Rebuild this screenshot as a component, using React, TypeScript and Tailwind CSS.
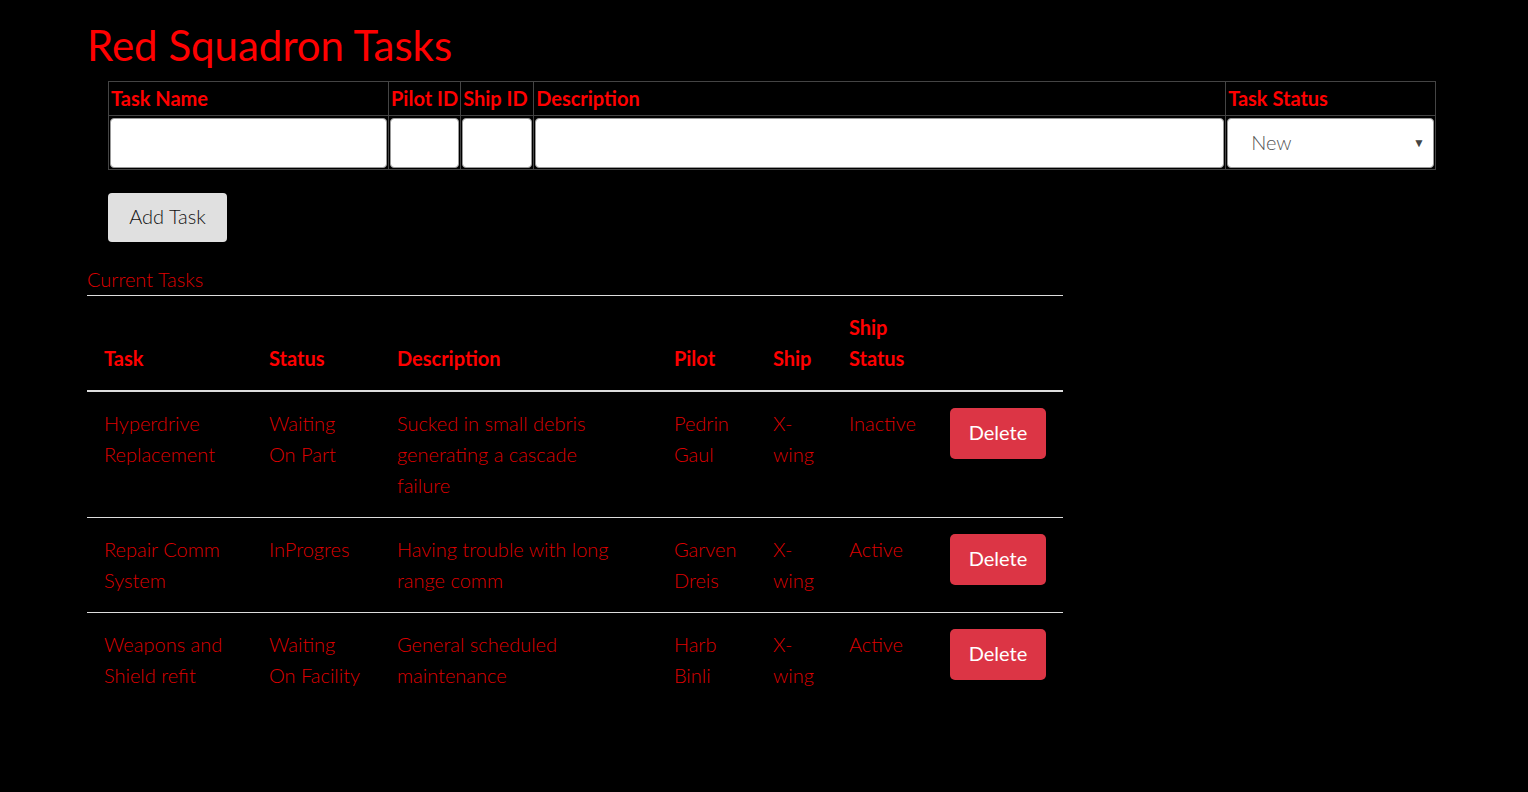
import React from "react";

const rows = [
  {
    task: ["Hyperdrive", "Replacement"],
    status: ["Waiting", "On Part"],
    desc: ["Sucked in small debris", "generating a cascade", "failure"],
    pilot: ["Pedrin", "Gaul"],
    ship: ["X-", "wing"],
    shipStatus: ["Inactive"],
  },
  {
    task: ["Repair Comm", "System"],
    status: ["InProgres"],
    desc: ["Having trouble with long", "range comm"],
    pilot: ["Garven", "Dreis"],
    ship: ["X-", "wing"],
    shipStatus: ["Active"],
  },
  {
    task: ["Weapons and", "Shield refit"],
    status: ["Waiting", "On Facility"],
    desc: ["General scheduled", "maintenance"],
    pilot: ["Harb", "Binli"],
    ship: ["X-", "wing"],
    shipStatus: ["Active"],
  },
];

function Lines({ lines }: { lines: string[] }) {
  return (
    <>
      {lines.map((l, i) => (
        <div key={i} className="whitespace-nowrap">
          {l}
        </div>
      ))}
    </>
  );
}

export default function App() {
  return (
    <div className="min-h-[792px] w-full bg-black font-['Lato','Open_Sans',sans-serif] text-[#ff0000]">
      <div className="pl-[87px] pt-[20px]">
        <h1 className="text-[42px] leading-[50px] font-normal text-[#ff0000]">Red Squadron Tasks</h1>

        <div className="ml-[21px] mt-[11px] w-[1328px]">
          <table className="w-full border-collapse border border-[#444]">
            <thead>
              <tr className="h-[34px]">
                <th className="w-[280px] border border-[#444] px-[2px] pb-[2px] text-left text-[20px] font-bold leading-[30px]">Task Name</th>
                <th className="w-[72px] border border-[#444] px-[2px] pb-[2px] text-left text-[20px] font-bold leading-[30px] whitespace-nowrap">Pilot ID</th>
                <th className="w-[73px] border border-[#444] px-[2px] pb-[2px] text-left text-[20px] font-bold leading-[30px] whitespace-nowrap">Ship ID</th>
                <th className="w-[692px] border border-[#444] px-[2px] pb-[2px] text-left text-[20px] font-bold leading-[30px]">Description</th>
                <th className="border border-[#444] px-[2px] pb-[2px] text-left text-[20px] font-bold leading-[30px]">Task Status</th>
              </tr>
            </thead>
            <tbody>
              <tr className="h-[54px]">
                <td className="border border-[#444] p-[1px]">
                  <input className="block h-[50px] w-full rounded-[4px] border border-[#999] bg-white" />
                </td>
                <td className="border border-[#444] p-[1px]">
                  <input className="block h-[50px] w-full rounded-[4px] border border-[#999] bg-white" />
                </td>
                <td className="border border-[#444] p-[1px]">
                  <input className="block h-[50px] w-full rounded-[4px] border border-[#999] bg-white" />
                </td>
                <td className="border border-[#444] p-[1px]">
                  <input className="block h-[50px] w-full rounded-[4px] border border-[#999] bg-white" />
                </td>
                <td className="border border-[#444] p-[1px]">
                  <div className="relative flex h-[50px] w-full items-center rounded-[4px] border border-[#999] bg-white pl-[23px] pb-[2px] text-[20px] font-light text-[#555]">
                    New
                    <span className="absolute right-[8px] top-[15px] text-[12px] text-[#444]">▼</span>
                  </div>
                </td>
              </tr>
            </tbody>
          </table>

          <button className="mt-[23px] h-[49px] w-[119px] rounded-[4px] bg-[#e0e0e0] pb-[3px] text-[20px] font-light text-[#111]">
            Add Task
          </button>
        </div>

        <div className="mt-[23px] w-[976px]">
          <div className="border-b border-[#ddd] pb-[2px] text-[20px] font-light leading-[28px] text-[#dd0000]">
            Current Tasks
          </div>
          <table className="w-full border-collapse">
            <thead>
              <tr className="border-b-2 border-[#ddd]">
                <th className="w-[165px] px-[17px] pt-[16px] pb-[16px] text-left align-bottom text-[20px] font-bold leading-[31px]">Task</th>
                <th className="w-[128px] px-[17px] pt-[16px] pb-[16px] text-left align-bottom text-[20px] font-bold leading-[31px]">Status</th>
                <th className="w-[277px] px-[17px] pt-[16px] pb-[16px] text-left align-bottom text-[20px] font-bold leading-[31px]">Description</th>
                <th className="w-[99px] px-[17px] pt-[16px] pb-[16px] text-left align-bottom text-[20px] font-bold leading-[31px]">Pilot</th>
                <th className="w-[76px] px-[17px] pt-[16px] pb-[16px] text-left align-bottom text-[20px] font-bold leading-[31px]">Ship</th>
                <th className="w-[101px] px-[17px] pt-[16px] pb-[16px] text-left align-bottom text-[20px] font-bold leading-[31px]">
                  <div>Ship</div>
                  <div>Status</div>
                </th>
                <th className="px-[17px]"></th>
              </tr>
            </thead>
            <tbody>
              {rows.map((r, i) => (
                <tr key={i} className={i < rows.length - 1 ? "border-b border-[#ddd]" : ""}>
                  <td className="px-[17px] pt-[16px] pb-[16px] align-top text-[20px] font-light leading-[31px] text-[#dd0000]">
                    <Lines lines={r.task} />
                  </td>
                  <td className="px-[17px] pt-[16px] pb-[16px] align-top text-[20px] font-light leading-[31px] text-[#dd0000]">
                    <Lines lines={r.status} />
                  </td>
                  <td className="px-[17px] pt-[16px] pb-[16px] align-top text-[20px] font-light leading-[31px] text-[#dd0000]">
                    <Lines lines={r.desc} />
                  </td>
                  <td className="px-[17px] pt-[16px] pb-[16px] align-top text-[20px] font-light leading-[31px] text-[#dd0000]">
                    <Lines lines={r.pilot} />
                  </td>
                  <td className="px-[17px] pt-[16px] pb-[16px] align-top text-[20px] font-light leading-[31px] text-[#dd0000]">
                    <Lines lines={r.ship} />
                  </td>
                  <td className="px-[17px] pt-[16px] pb-[16px] align-top text-[20px] font-light leading-[31px] text-[#dd0000]">
                    <Lines lines={r.shipStatus} />
                  </td>
                  <td className="px-[17px] pt-[16px] pb-[16px] align-top">
                    <button className="h-[51px] w-[96px] rounded-[5px] bg-[#dc3545] pb-[3px] text-[20px] font-normal text-white">
                      Delete
                    </button>
                  </td>
                </tr>
              ))}
            </tbody>
          </table>
        </div>
      </div>
    </div>
  );
}
